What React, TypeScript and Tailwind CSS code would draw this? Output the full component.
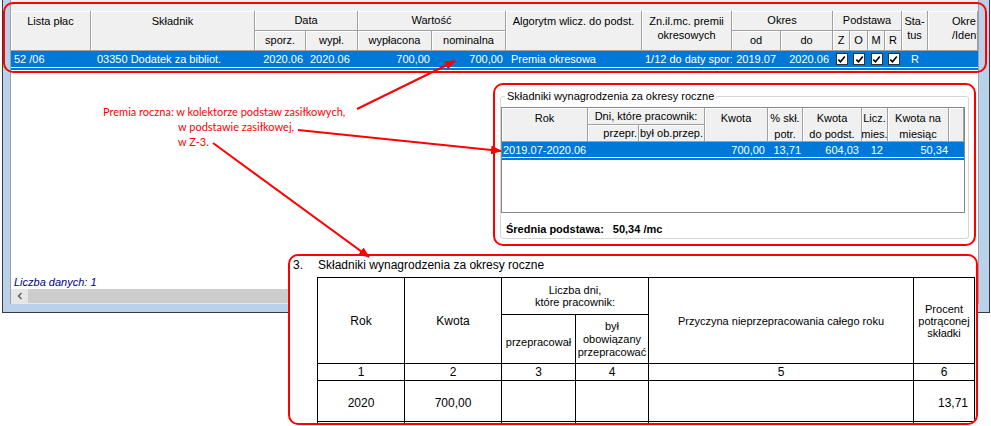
import React from "react";

const mainCols =
  "grid-cols-[80px_164px_51px_52px_74px_74px_136px_90px_49px_52px_17px_18px_17px_17px_26px_50px]";
const boxCols = "grid-cols-[86px_51px_66px_63px_35px_59px_26px_61px_15px]";

type HdProps = { children?: React.ReactNode; className?: string };

function Hd({ children, className = "" }: HdProps) {
  return (
    <div
      className={`flex overflow-hidden whitespace-nowrap border-r border-b border-[#a0a0a0] bg-[#f0f0f0] text-center shadow-[inset_1px_1px_0_#ffffff] ${className}`}
    >
      {children}
    </div>
  );
}

function Check() {
  return (
    <span className="flex h-[12px] w-[12px] items-center justify-center border border-[#333333] bg-white">
      <svg width="9" height="9" viewBox="0 0 9 9">
        <path d="M1.3 4.6 L3.5 6.8 L7.8 1.6" fill="none" stroke="#000" strokeWidth="1.6" />
      </svg>
    </span>
  );
}

function MainGrid() {
  const top = "justify-center pt-[3px] leading-[14px]";
  const mid = "items-center justify-center";
  return (
    <>
      <div className={`grid ${mainCols} grid-rows-[20px_20px]`}>
        <Hd className={`row-span-2 ${top}`}>Lista płac</Hd>
        <Hd className={`row-span-2 ${top}`}>Składnik</Hd>
        <Hd className={`col-span-2 ${mid}`}>Data</Hd>
        <Hd className={`col-span-2 ${mid}`}>Wartość</Hd>
        <Hd className={`row-span-2 ${top}`}>Algorytm wlicz. do podst.</Hd>
        <Hd className={`row-span-2 ${top}`}>
          Zn.il.mc. premii
          <br />
          okresowych
        </Hd>
        <Hd className={`col-span-2 ${mid}`}>Okres</Hd>
        <Hd className={`col-span-4 ${mid}`}>Podstawa</Hd>
        <Hd className={`row-span-2 ${top}`}>
          Sta-
          <br />
          tus
        </Hd>
        <Hd className="row-span-2 pl-[24px] pt-[3px] text-left leading-[14px]">
          Okre
          <br />
          /Ident
        </Hd>
        <Hd className={mid}>sporz.</Hd>
        <Hd className={mid}>wypł.</Hd>
        <Hd className={mid}>wypłacona</Hd>
        <Hd className={mid}>nominalna</Hd>
        <Hd className={mid}>od</Hd>
        <Hd className={mid}>do</Hd>
        <Hd className={mid}>Z</Hd>
        <Hd className={mid}>O</Hd>
        <Hd className={mid}>M</Hd>
        <Hd className={mid}>R</Hd>
      </div>
      <div className={`grid ${mainCols} h-[16px] items-center whitespace-nowrap bg-[#0078d7] text-white`}>
        <span className="pl-[3px]">52 /06</span>
        <span className="pl-[6px]">03350 Dodatek za bibliot.</span>
        <span className="pr-[3px] text-right">2020.06</span>
        <span className="pl-[4px]">2020.06</span>
        <span className="pr-[2px] text-right">700,00</span>
        <span className="pr-[3px] text-right">700,00</span>
        <span className="pl-[5px]">Premia okresowa</span>
        <span className="overflow-hidden pl-[3px]">1/12 do daty spor:</span>
        <span className="pr-[5px] text-right">2019.07</span>
        <span className="pr-[4px] text-right">2020.06</span>
        <span className="flex justify-center">
          <Check />
        </span>
        <span className="flex justify-center">
          <Check />
        </span>
        <span className="flex justify-center">
          <Check />
        </span>
        <span className="flex justify-center">
          <Check />
        </span>
        <span className="text-center">R</span>
        <span />
      </div>
      <div className="h-px bg-white" />
      <div className="h-[2px] bg-[#0078d7]" />
    </>
  );
}

function YearBox() {
  const top = "justify-center pt-[2px] leading-[16px]";
  const mid = "items-center justify-center";
  return (
    <div className="absolute left-[493px] top-[83px] h-[163px] w-[483px] rounded-[10px] border-2 border-[#ff0000] bg-white px-[5px] pt-[5px]">
      <fieldset className="rounded-[3px] border border-[#d5d5d5] pr-[3px]">
        <legend className="ml-[4px] px-[2px] leading-[13px]">Składniki wynagrodzenia za okresy roczne</legend>
        <div className="mt-[4px] h-[106px] border border-[#828790] bg-white">
          <div className={`grid ${boxCols} grid-rows-[17px_17px]`}>
            <Hd className={`row-span-2 ${top}`}>Rok</Hd>
            <Hd className={`col-span-2 ${mid}`}>Dni, które pracownik:</Hd>
            <Hd className={`row-span-2 ${top}`}>Kwota</Hd>
            <Hd className={`row-span-2 ${top}`}>
              % skł.
              <br />
              potr.
            </Hd>
            <Hd className={`row-span-2 ${top}`}>
              Kwota
              <br />
              do podst.
            </Hd>
            <Hd className={`row-span-2 ${top}`}>
              Licz.
              <br />
              mies.
            </Hd>
            <Hd className={`row-span-2 ${top}`}>
              Kwota na
              <br />
              miesiąc
            </Hd>
            <Hd className="row-span-2" />
            <Hd className="items-center justify-end pr-[1px]">przepr.</Hd>
            <Hd className={mid}>był ob.przep.</Hd>
          </div>
          <div className={`grid ${boxCols} h-[15px] items-center whitespace-nowrap bg-[#0078d7] text-white`}>
            <span className="col-span-3 pl-[1px]">2019.07-2020.06</span>
            <span className="pr-[3px] text-right">700,00</span>
            <span className="pr-[2px] text-right">13,71</span>
            <span className="pr-[3px] text-right">604,03</span>
            <span className="pr-[5px] text-right">12</span>
            <span className="pr-[1px] text-right">50,34</span>
            <span />
          </div>
          <div className="h-px bg-white" />
          <div className="h-[2px] bg-[#0078d7]" />
        </div>
        <div className="mb-[2px] mt-[10px] pl-[5px] font-bold leading-[13px]">
          Średnia podstawa:
          <span className="ml-[9px]">50,34 /mc</span>
        </div>
      </fieldset>
    </div>
  );
}

function Z3Box() {
  const td = "border border-black text-center align-middle";
  return (
    <div className="absolute left-[288px] top-[254px] h-[171px] w-[690px] overflow-hidden rounded-[10px] border-2 border-[#ff0000] bg-white pl-[3px] pt-[2px] text-[12px]">
      <div className="flex leading-[14px]">
        <span className="w-[25px]">3.</span>
        <span>Składniki wynagrodzenia za okresy roczne</span>
      </div>
      <table className="ml-[24px] mt-[5px] w-[657px] table-fixed border-collapse text-[11px] leading-[12px]">
        <colgroup>
          <col className="w-[87px]" />
          <col className="w-[97px]" />
          <col className="w-[74px]" />
          <col className="w-[73px]" />
          <col className="w-[265px]" />
          <col className="w-[61px]" />
        </colgroup>
        <tbody>
          <tr className="h-[37px]">
            <td rowSpan={2} className={`${td} text-[12px]`}>
              Rok
            </td>
            <td rowSpan={2} className={`${td} text-[12px]`}>
              Kwota
            </td>
            <td colSpan={2} className={td}>
              Liczba dni,
              <br />
              które pracownik:
            </td>
            <td rowSpan={2} className={td}>
              Przyczyna nieprzepracowania całego roku
            </td>
            <td rowSpan={2} className={td}>
              Procent
              <br />
              potrąconej
              <br />
              składki
            </td>
          </tr>
          <tr className="h-[49px]">
            <td className={`${td} pt-[6px]`}>przepracował</td>
            <td className={`${td} leading-[13px]`}>
              był
              <br />
              obowiązany
              <br />
              przepracować
            </td>
          </tr>
          <tr className="h-[17px] text-[12px]">
            <td className={td}>1</td>
            <td className={td}>2</td>
            <td className={td}>3</td>
            <td className={td}>4</td>
            <td className={td}>5</td>
            <td className={td}>6</td>
          </tr>
          <tr className="h-[41px] text-[12px]">
            <td className={`${td} pt-[4px]`}>2020</td>
            <td className={`${td} pt-[4px]`}>700,00</td>
            <td className={td} />
            <td className={td} />
            <td className={td} />
            <td className={`${td} pr-[6px] pt-[4px] text-right`}>13,71</td>
          </tr>
          <tr className="h-[20px]">
            <td className={td} />
            <td className={td} />
            <td className={td} />
            <td className={td} />
            <td className={td} />
            <td className={td} />
          </tr>
        </tbody>
      </table>
    </div>
  );
}

export default function App() {
  return (
    <div className="relative h-[426px] w-[991px] overflow-hidden bg-white font-['Liberation_Sans',Arial,sans-serif] text-[11px] text-black">
      <div className="ml-[2px] h-[313px] w-[988px] border-x border-b border-[#3a3a3a] bg-[#b9d1ea] pb-[8px] pl-[7px] pr-[10px]">
        <div className="flex h-full flex-col border-x border-[#a0a0a0] bg-white">
          <div className="h-[11px] bg-[#f0f0f0]" />
          <MainGrid />
          <div className="flex flex-1 items-end pl-[3px] italic leading-[13px] text-[#000080]">Liczba danych: 1</div>
          <div className="flex h-[14px] bg-[#cdcdcd]">
            <div className="flex w-[17px] items-center justify-center bg-[#e6e6e6]">
              <svg width="8" height="8" viewBox="0 0 8 8">
                <path d="M5.5 1 L2.5 4 L5.5 7" fill="none" stroke="#606060" strokeWidth="1.5" />
              </svg>
            </div>
          </div>
          <div className="h-px bg-[#e8e8e8]" />
        </div>
      </div>

      <div className="pointer-events-none absolute left-[3px] top-[2px] h-[71px] w-[984px] rounded-[10px] border-2 border-[#ff0000]" />

      <YearBox />
      <Z3Box />

      <div className="absolute left-[103px] top-[104px] font-['Lato',sans-serif] text-[11px] leading-[15px] text-[#ff0000]">
        <div>Premia roczna: w kolektorze podstaw zasiłkowych,</div>
        <div className="pl-[75px]">w podstawie zasiłkowej,</div>
        <div className="pl-[75px]">w Z-3.</div>
      </div>

      <svg className="pointer-events-none absolute left-0 top-0" width="991" height="426">
        <defs>
          <marker id="ah" markerWidth="11" markerHeight="9" refX="10" refY="4.5" orient="auto" markerUnits="userSpaceOnUse">
            <path d="M0 0 L11 4.5 L0 9 Z" fill="#ff0000" />
          </marker>
        </defs>
        <line x1="357" y1="109" x2="455" y2="61" stroke="#ff0000" strokeWidth="2" markerEnd="url(#ah)" />
        <line x1="298" y1="130" x2="501" y2="151" stroke="#ff0000" strokeWidth="2" markerEnd="url(#ah)" />
        <line x1="213" y1="143" x2="369" y2="257" stroke="#ff0000" strokeWidth="2" markerEnd="url(#ah)" />
      </svg>
    </div>
  );
}
